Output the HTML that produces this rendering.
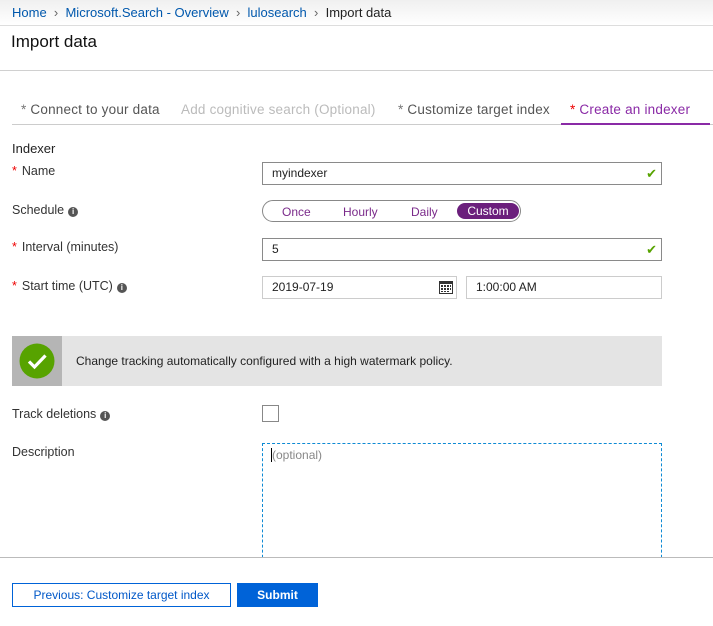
<!DOCTYPE html>
<html><head><meta charset="utf-8"><style>
body{margin:0;width:713px;height:625px;overflow:hidden;background:#fff;font-family:"Liberation Sans",sans-serif;color:#333;position:relative}
.a{position:absolute;white-space:nowrap}
.lbl{font-size:12.5px;color:#333}
.req{color:#e00;margin-right:5px}
.inp{position:absolute;border:1px solid #8a8a8a;box-sizing:border-box;height:23px;font-size:12px;line-height:21px;padding-left:9px;color:#222}
.chk{position:absolute;right:4px;top:0;color:#57a300;font-size:13px}
.info{display:inline-block;width:10px;height:10px;border-radius:50%;background:#555;color:#fff;font-size:8px;line-height:10px;text-align:center;font-weight:bold;margin-left:4px;vertical-align:0}
.tab{font-size:13.5px;letter-spacing:0.2px}
</style></head><body>
<div class="a" style="left:0;top:0;width:713px;height:25px;background:linear-gradient(#f0f0f0,#fff)"></div>
<div class="a" style="left:12px;top:5px;font-size:13px;color:#0058ad">Home <span style="color:#666">&nbsp;›&nbsp;</span> Microsoft.Search - Overview <span style="color:#666">&nbsp;›&nbsp;</span> lulosearch <span style="color:#666">&nbsp;›&nbsp;</span> <span style="color:#222">Import data</span></div>
<div class="a" style="left:0;top:25px;width:713px;height:1px;background:#ddd"></div>
<div class="a" style="left:11px;top:32px;font-size:17px;color:#111">Import data</div>
<div class="a" style="left:0;top:70px;width:713px;height:1px;background:#d0d0d0"></div>
<div class="a tab" style="left:21px;top:102px;color:#555"><span style="color:#777">*</span> Connect to your data</div>
<div class="a tab" style="left:181px;top:102px;color:#bbb">Add cognitive search (Optional)</div>
<div class="a tab" style="left:398px;top:102px;color:#555"><span style="color:#777">*</span> Customize target index</div>
<div class="a tab" style="left:570px;top:102px;color:#8a2aa6"><span style="color:#e00">*</span> Create an indexer</div>
<div class="a" style="left:12px;top:124px;width:701px;height:1px;background:#ccc"></div>
<div class="a" style="left:561px;top:123px;width:149px;height:2px;background:#8a2aa6"></div>
<div class="a" style="left:12px;top:141px;font-size:13px;color:#222">Indexer</div>
<div class="a lbl" style="left:12px;top:164px"><span class="req">*</span>Name</div>
<div class="inp" style="left:262px;top:162px;width:400px">myindexer<span class="chk">✔</span></div>
<div class="a lbl" style="left:12px;top:203px">Schedule<span class="info">i</span></div>
<div class="a" style="left:262px;top:200px;width:259px;height:22px;border:1px solid #888;border-radius:12px;box-sizing:border-box;font-size:12px;color:#7a2a8a">
<span class="a" style="left:19px;top:4px">Once</span><span class="a" style="left:80px;top:4px">Hourly</span><span class="a" style="left:148px;top:4px">Daily</span>
<span class="a" style="left:194px;top:2px;width:62px;height:16px;border-radius:9px;background:#6b1f7c;color:#fff;text-align:center;line-height:16px">Custom</span></div>
<div class="a lbl" style="left:12px;top:240px"><span class="req">*</span>Interval (minutes)</div>
<div class="inp" style="left:262px;top:238px;width:400px">5<span class="chk">✔</span></div>
<div class="a lbl" style="left:12px;top:279px"><span class="req">*</span>Start time (UTC)<span class="info">i</span></div>
<div class="inp" style="left:262px;top:276px;width:195px;border-color:#ccc">2019-07-19
<svg style="position:absolute;right:3px;top:4px" width="14" height="13"><rect x="0" y="0" width="14" height="13" fill="#333"/><rect x="1" y="3" width="12" height="9" fill="#fff"/><g fill="#333"><rect x="2" y="4" width="2" height="2"/><rect x="5" y="4" width="2" height="2"/><rect x="8" y="4" width="2" height="2"/><rect x="11" y="4" width="1" height="2"/><rect x="2" y="7" width="2" height="2"/><rect x="5" y="7" width="2" height="2"/><rect x="8" y="7" width="2" height="2"/><rect x="11" y="7" width="1" height="2"/><rect x="2" y="10" width="2" height="1"/><rect x="5" y="10" width="2" height="1"/><rect x="8" y="10" width="2" height="1"/></g></svg></div>
<div class="inp" style="left:466px;top:276px;width:196px;border-color:#ccc">1:00:00 AM</div>
<div class="a" style="left:12px;top:336px;width:650px;height:50px;background:#e4e4e4"></div>
<div class="a" style="left:12px;top:336px;width:50px;height:50px;background:#b5b5b5"></div>
<svg class="a" style="left:19px;top:343px" width="36" height="36"><circle cx="18" cy="18" r="17.5" fill="#57a300"/><path d="M10 18.5l5.5 5.5 11-11.5" stroke="#fff" stroke-width="3.2" fill="none"/></svg>
<div class="a" style="left:76px;top:354px;font-size:12px;color:#222">Change tracking automatically configured with a high watermark policy.</div>
<div class="a lbl" style="left:12px;top:407px">Track deletions<span class="info">i</span></div>
<div class="a" style="left:262px;top:405px;width:17px;height:17px;border:1px solid #888;box-sizing:border-box"></div>
<div class="a lbl" style="left:12px;top:445px">Description</div>
<div class="a" style="left:262px;top:443px;width:400px;height:130px;border:1px dashed #0d8ad4;box-sizing:border-box"></div>
<div class="a" style="left:271px;top:448px;width:1px;height:14px;background:#000"></div>
<div class="a" style="left:272px;top:448px;font-size:12px;color:#888">(optional)</div>
<div class="a" style="left:0;top:557px;width:713px;height:68px;background:#fff;border-top:1px solid #bbb"></div>
<div class="a" style="left:12px;top:583px;width:219px;height:24px;border:1px solid #0063d8;box-sizing:border-box;font-size:12px;color:#0058c8;text-align:center;line-height:22px">Previous: Customize target index</div>
<div class="a" style="left:237px;top:583px;width:81px;height:24px;background:#0063d8;font-size:12px;font-weight:bold;color:#fff;text-align:center;line-height:24px">Submit</div>
</body></html>
